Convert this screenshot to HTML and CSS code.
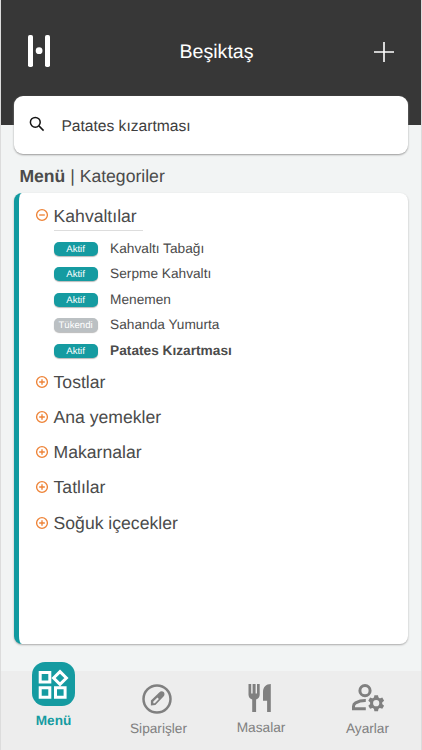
FILE: index.html
```html
<!DOCTYPE html>
<html lang="tr">
<head>
<meta charset="utf-8">
<title>Menü</title>
<link rel="stylesheet" href="styles.css">
</head>
<body>
<svg width="0" height="0" class="defs">
  <symbol id="minus" viewBox="0 0 14 14"><circle cx="7" cy="7" r="5.4"/><path d="M4.2 7h5.6"/></symbol>
  <symbol id="plus" viewBox="0 0 14 14"><circle cx="7" cy="7" r="5.4"/><path d="M4.2 7h5.6M7 4.2v5.6"/></symbol>
</svg>
<div class="app">
  <header class="header">
    <svg class="logo" viewBox="0 0 22 32"><rect width="5" height="32" rx="1.8"/><rect x="17" width="5" height="32" rx="1.8"/><circle cx="11.1" cy="15.7" r="3.4"/></svg>
    <h1>Beşiktaş</h1>
    <svg class="add" viewBox="0 0 20 20"><path d="M10 0v20M0 10h20"/></svg>
  </header>
  <main>
    <div class="search">
      <svg viewBox="0 0 16 16"><circle cx="6.3" cy="6.3" r="4.9"/><path d="M9.9 9.9l4.7 4.7"/></svg>
      <span>Patates kızartması</span>
    </div>
    <h2><b>Menü</b> | Kategoriler</h2>
    <section class="panel">
      <div class="category open"><svg><use href="#minus"/></svg><span>Kahvaltılar</span></div>
      <ul class="items">
        <li><span class="badge">Aktif</span>Kahvaltı Tabağı</li>
        <li><span class="badge">Aktif</span>Serpme Kahvaltı</li>
        <li><span class="badge">Aktif</span>Menemen</li>
        <li><span class="badge out">Tükendi</span>Sahanda Yumurta</li>
        <li class="match"><span class="badge">Aktif</span>Patates Kızartması</li>
      </ul>
      <div class="category"><svg><use href="#plus"/></svg><span>Tostlar</span></div>
      <div class="category"><svg><use href="#plus"/></svg><span>Ana yemekler</span></div>
      <div class="category"><svg><use href="#plus"/></svg><span>Makarnalar</span></div>
      <div class="category"><svg><use href="#plus"/></svg><span>Tatlılar</span></div>
      <div class="category"><svg><use href="#plus"/></svg><span>Soğuk içecekler</span></div>
    </section>
  </main>
  <nav>
    <div class="tab active">
      <div class="tile"><svg viewBox="0 0 43 44"><path d="M8.2 10.5h9.6v9.6H8.2zM8.2 25.7h9.6v9.6H8.2zM23.5 25.7h9.6v9.6h-9.6zM28 9.6l6.4 6.4-6.4 6.4-6.4-6.4z"/></svg></div>
      <span>Menü</span>
    </div>
    <div class="tab orders">
      <svg viewBox="0 0 30 30"><circle cx="15" cy="15" r="13.5" fill="none" stroke="currentColor" stroke-width="2.5"/><path fill="currentColor" fill-rule="evenodd" d="M8.9 21.6v-5l8.3-8.2c1.4-1.3 3.4-1.4 4.5-.3s1.1 3.2-.2 4.5l-8.1 8.3zM11.3 19.3l1.5-.1 4.1-4.2-1.5-1.5-4.1 4.1z"/></svg>
      <span>Siparişler</span>
    </div>
    <div class="tab tables">
      <svg viewBox="0 0 24 30"><path fill="currentColor" d="M.5 1h2.7v9.5h1.4V1h3v9.5H9V1h2.7v10.8c0 2.3-1.4 4-3.6 4.6V29H4.2V16.4C1.9 15.8.5 14.1.5 11.8zM22.8 1v28h-3.7V17.8H15V9C15 4.2 18 1 22.8 1z"/></svg>
      <span>Masalar</span>
    </div>
    <div class="tab settings">
      <svg viewBox="0 0 34 30"><g fill="none" stroke="currentColor" stroke-width="3"><circle cx="14" cy="7.7" r="5.1"/><path d="M14.8 17.6c-4-.1-7.6.9-10.2 2.3-1.4.8-2.1 1.8-2.1 3.3v2.5h12.3"/><circle cx="25.2" cy="20.2" r="4.6"/></g><path fill="currentColor" d="M23.4 12.2h3.6l.8 4h-5.2zM23.4 28.2h3.6l.8-4h-5.2zM31.3 14.6l1.8 3.1-3.1 2.7-2.6-4.5zM33.1 22.7l-1.8 3.1-3.9-1.3 2.6-4.5zM19.1 14.6l-1.8 3.1 3.1 2.7 2.6-4.5zM17.3 22.7l1.8 3.1 3.9-1.3-2.6-4.5z"/></svg>
      <span>Ayarlar</span>
    </div>
  </nav>
</div>
</body>
</html>
```
FILE: styles.css
```css
* { box-sizing: border-box; }
body { margin: 0; font-family: "Liberation Sans", Arial, sans-serif; color: #4b4b4b; text-rendering: geometricPrecision; }
svg { display: block; flex: none; }
.defs { display: none; }
.app { width: 422px; height: 750px; display: flex; flex-direction: column; background: #f2f4f4; border-left: 1px solid #dcdcdc; border-right: 1px solid #dcdcdc; overflow: hidden; }
.header { height: 125px; flex: none; background: #373737; color: #fff; display: grid; grid-template-columns: 22px 1fr 20px; align-items: start; padding: 35px 27px 0; }
.logo { width: 22px; height: 32px; fill: #fff; }
h1 { margin: 0; padding-left: 9px; text-align: center; font-size: 19.6px; font-weight: 400; line-height: 35px; }
.add { width: 20px; height: 20px; margin-top: 7px; fill: none; stroke: #fff; stroke-width: 1.6; }
main { padding: 0 13.5px 0 13.4px; margin-top: -29.5px; height: 575.5px; flex: none; }
.search { height: 58.5px; background: #fff; border-radius: 9px; box-shadow: 0 1px 2px #999; display: flex; align-items: center; gap: 16px; padding-left: 15px; font-size: 15.6px; color: #3e3e3e; }
.search svg { width: 16px; height: 16px; fill: none; stroke: #151515; stroke-width: 1.5; margin-top: -2px; }
.search span { padding-top: 5px; }
h2 { margin: 11px 0 5.5px 5px; font-size: 17.6px; line-height: 22px; font-weight: 400; }
.panel { height: 451px; background: #fff; border-left: 5px solid #119aa0; border-radius: 8px; box-shadow: 0 1px 2px #aaa; padding: 5px 0 0 15.2px; }
.category { height: 35.2px; display: flex; align-items: center; gap: 5px; font-size: 17.6px; line-height: 22px; }
.category svg { width: 14px; height: 14px; fill: none; stroke: #ee8337; stroke-width: 1.35; }
.category.open span { width: 89px; height: 31px; padding-top: 5px; border-bottom: 1px solid #ddd; }
.items { list-style: none; margin: 3px 0 1px 19px; padding: 0; }
.items li { height: 25.5px; display: flex; align-items: center; font-size: 13.7px; white-space: nowrap; }
.badge { width: 44px; height: 14px; margin: 1px 12.5px 0 0; border-radius: 5px; background: #159ba1; box-shadow: 0 1px 1px #bbb; color: #fff; font-size: 9.6px; line-height: 15px; text-align: center; }
.badge.out { background: #bbc0c3; }
.match { font-weight: 700; }
.match .badge { font-weight: 400; }
nav { height: 79px; flex: none; background: #ededed; display: flex; color: #808080; font-size: 13.7px; line-height: 16px; }
.tab { width: 105px; flex: none; display: flex; flex-direction: column; align-items: center; }
.active { color: #159ba1; font-weight: 700; font-size: 13.6px; }
.tile { width: 43px; height: 44px; margin: -9px 0 7px; border-radius: 13px; background: #159ba1; }
.tile svg { width: 43px; height: 44px; fill: none; stroke: #fff; stroke-width: 3; }
.orders { width: 105px; }
.orders svg { width: 30px; height: 30px; margin: 12.5px 3px 7px 0; }
.tables { width: 100px; }
.tables svg { width: 24px; height: 30px; margin: 12px 2px 7px 0; }
.settings { width: 110px; }
.settings svg { width: 34px; height: 30px; margin: 12px 0 8px; }
.settings { padding-left: 3px; }
```
